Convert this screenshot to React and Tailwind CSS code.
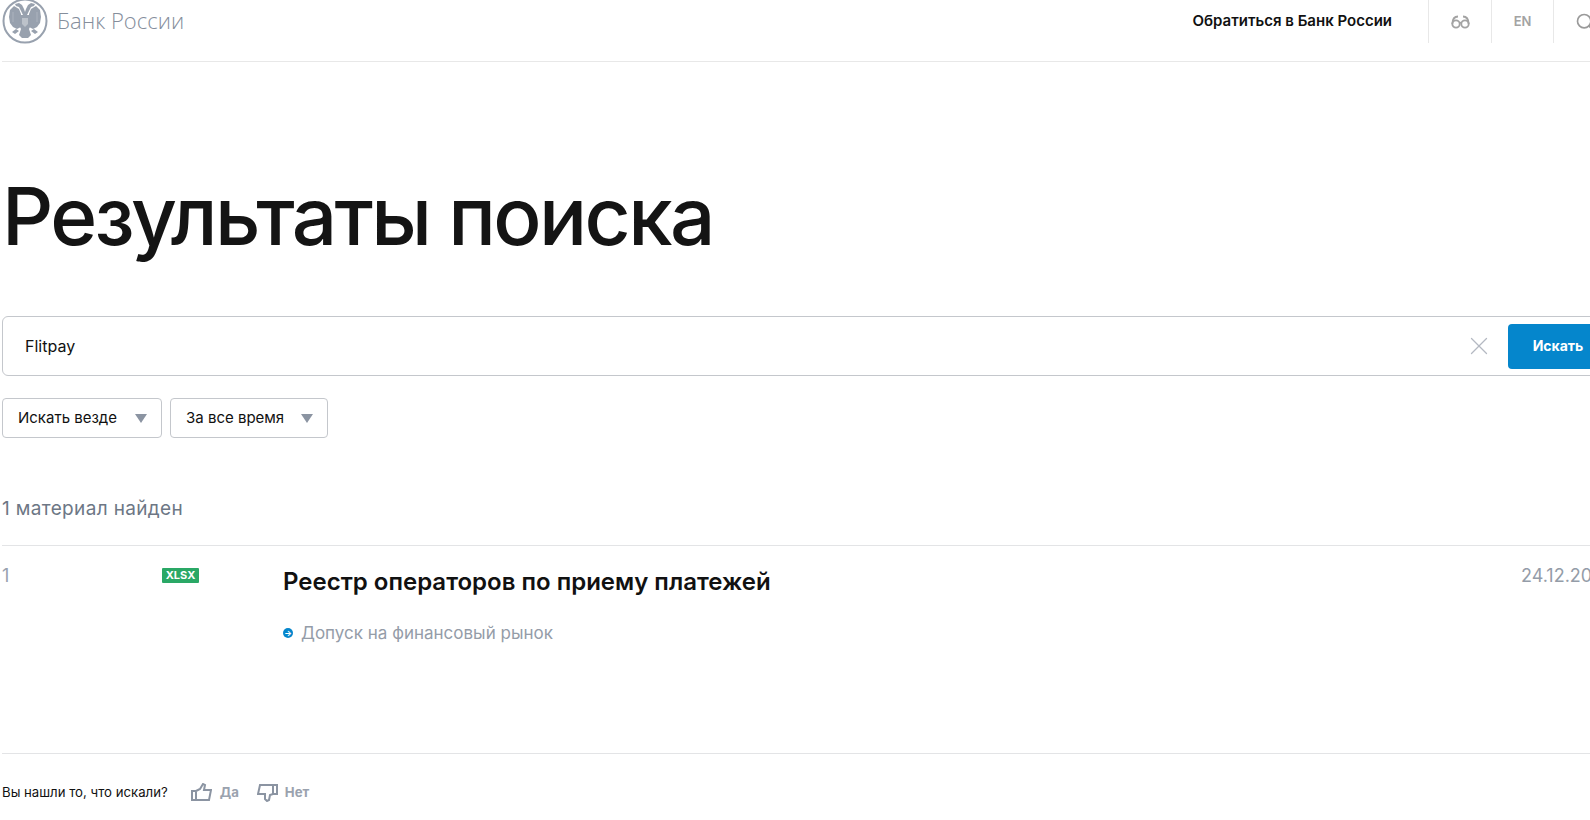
import React from "react";
import { Search, X } from "lucide-react";

function Eagle() {
  return (
    <svg width="46" height="44" viewBox="0 2 46 44" className="shrink-0">
      <circle cx="23" cy="23" r="21.5" fill="none" stroke="#98a1ae" strokeWidth="2" />
      {/* wings */}
      <path d="M19 16 17 11 12 8 8 12 7 19 8 25 11 29 15 31 19 29z" fill="#98a1ae" />
      <path d="M27 16 29 11 34 8 38 12 39 19 38 25 35 29 31 31 27 29z" fill="#98a1ae" />
      {/* heads */}
      <path d="M22 19 19 13 17 9 14 8 13 6 17 5 20 7 22 11 23 14 24 11 26 7 29 5 33 6 32 8 29 9 27 13 24 19z" fill="#98a1ae" />
      {/* body and tail */}
      <path d="M18 17h10l1 10-2 4 2 6-3 3h-6l-3-3 2-6-2-4z" fill="#98a1ae" />
      <path d="M14 31 10 34 13 36 17 33zM32 31l4 3-3 2-4-3z" fill="#98a1ae" />
      <path d="M20 20h6v6l-3 3-3-3z" fill="#fff" opacity=".35" />
      <path d="M11 14v10M35 14v10" stroke="#fff" strokeWidth=".6" opacity=".35" />
    </svg>
  );
}

function Glasses() {
  return (
    <svg width="19" height="14" viewBox="0 0 19 14" fill="none" stroke="#a3a3a3" strokeWidth="1.8">
      <circle cx="5" cy="9" r="3.7" />
      <circle cx="14" cy="9" r="3.7" />
      <path d="M8.5 8q1-.8 2 0M1.3 9C1.5 4 3.5 1.5 7 1.5M17.7 9C17.5 4 15.5 1.5 12 1.5" />
    </svg>
  );
}

function ThumbUp() {
  return (
    <svg width="21" height="19" viewBox="0 0 21 19" fill="none" stroke="#8b94a2" strokeWidth="2">
      <path d="M1 8h4v9H1zM5 8l4-2 3-5 2 1-1 5h7l-2 10H5" />
    </svg>
  );
}

function ThumbDown() {
  return (
    <svg width="21" height="19" viewBox="0 0 21 19" fill="none" stroke="#8b94a2" strokeWidth="2">
      <path d="M20 2h-4v9h4zM16 2H3L1 11h7v5l2 2 2-1 1-5 3-1" />
    </svg>
  );
}

function FilterButton({ label, width }) {
  return (
    <button className={`flex h-10 items-center justify-between rounded border border-[#c4c7cc] pl-[15px] pr-[14px] text-[15px] text-[#111] ${width}`}>
      {label}
      <span className="h-0 w-0 border-x-[6.5px] border-t-[9px] border-x-transparent border-t-[#8b94a2]" />
    </button>
  );
}

export default function App() {
  return (
    <div className="h-[820px] w-[1590px] overflow-hidden bg-white pl-[2px] font-['Inter',sans-serif] text-[#111]">
      <div className="w-[1614px]">
        {/* Header */}
        <header className="flex h-[62px] items-start border-b border-[#e8e8e8] pr-[3px]">
          <div className="flex h-[44px] items-center gap-[9px] overflow-hidden">
            <Eagle />
            <span className="pb-[3px] font-['Open_Sans',sans-serif] text-[22px] font-light text-[#858e9c]">Банк России</span>
          </div>
          <div className="ml-auto flex h-[43px] items-center">
            <a className="pr-[36px] text-[15px] font-semibold">Обратиться в Банк России</a>
            <div className="flex h-full w-[63px] items-center justify-center border-l border-[#e8e8e8]">
              <Glasses />
            </div>
            <div className="flex h-full w-[62px] items-center justify-center border-l border-[#e8e8e8] text-[13px] font-semibold text-[#a3a3a3]">
              EN
            </div>
            <div className="flex h-full w-[60px] items-center border-l border-[#e8e8e8] pl-[21px]">
              <Search size={20} strokeWidth={2} className="text-[#9a9a9a]" />
            </div>
          </div>
        </header>

        {/* Title */}
        <h1 className="pt-[99px] text-[80px] font-[540] leading-[110px] tracking-[-2.6px] text-[#141414]">
          Результаты поиска
        </h1>

        {/* Search */}
        <div className="mt-[45px] flex h-[60px] items-center rounded-md border border-[#c4c7cc] pl-[22px] pr-[7px]">
          <span className="text-base">Flitpay</span>
          <X size={30} strokeWidth={1} className="ml-auto mr-[14px] text-[#b4b9c2]" />
          <button className="h-[45px] w-[100px] rounded bg-[#0586cc] text-sm font-bold text-white">Искать</button>
        </div>

        {/* Filters */}
        <div className="mt-[22px] flex gap-2">
          <FilterButton label="Искать везде" width="w-[160px]" />
          <FilterButton label="За все время" width="w-[158px]" />
        </div>

        <p className="mt-[59px] text-[19px] leading-6 tracking-[0.35px] text-[#6d7785]">1 материал найден</p>

        {/* Result row */}
        <div className="mt-[24px] flex h-[209px] border-y border-[#e3e4e6]">
          <span className="w-[160px] pt-[20px] text-lg leading-5 text-[#98a1ae]">1</span>
          <div className="w-[121px] pt-[22px]">
            <span className="block w-[37px] rounded-[1px] bg-[#2aa866] text-center text-[11px] font-bold leading-[15px] text-white">XLSX</span>
          </div>
          <div className="flex-1 pt-[20px]">
            <h2 className="text-2xl leading-8 font-semibold">Реестр операторов по приему платежей</h2>
            <div className="mt-[23px] flex items-center gap-2 text-[17px] leading-6 text-[#949ca8]">
              <span className="flex h-[10px] w-[10px] items-center justify-center rounded-full bg-[#0586cc] text-[8px] leading-none font-bold text-white">→</span>
              Допуск на финансовый рынок
            </div>
          </div>
          <span className="w-[95px] whitespace-nowrap pt-[20px] text-lg leading-5 text-[#949ca8]">24.12.2024</span>
        </div>

        {/* Feedback */}
        <div className="mt-[29px] flex items-center text-[13.2px]">
          <span>Вы нашли то, что искали?</span>
          <span className="ml-[23px] flex items-center gap-[8px] font-bold text-[#9aa2ae]">
            <ThumbUp />
            Да
          </span>
          <span className="ml-[18px] flex items-center gap-[7px] font-bold text-[#9aa2ae]">
            <ThumbDown />
            Нет
          </span>
        </div>
      </div>
    </div>
  );
}
